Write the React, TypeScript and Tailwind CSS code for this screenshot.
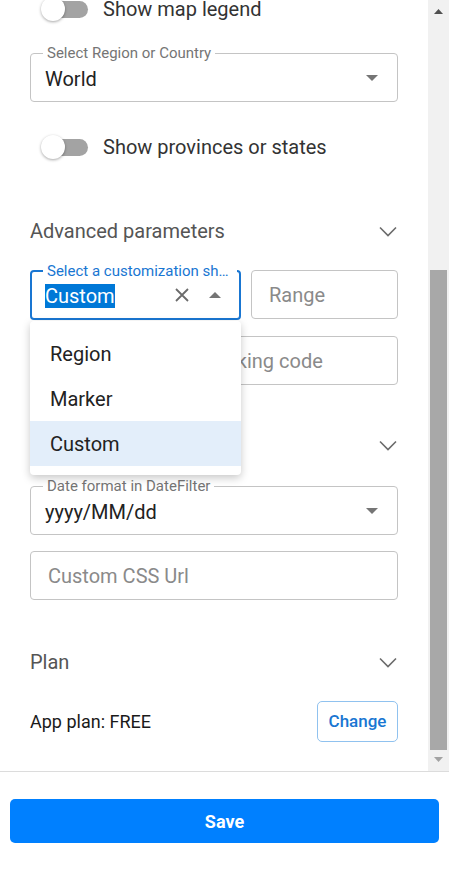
import React from "react";

function Toggle({ label }: { label: string }) {
    return (
        <div className="flex items-center pl-[11px] gap-[15px] h-[24px]">
            <div className="relative w-[47px] h-[24px] shrink-0">
                <div className="absolute left-[2px] top-[3.5px] w-[45px] h-[17px] rounded-full bg-[#a3a3a3]" />
                <div className="absolute left-0 top-0 w-[24px] h-[24px] rounded-full bg-white shadow-[0_1px_3px_rgba(0,0,0,0.35)]" />
            </div>
            <span className="text-[20px] text-[#333]">{label}</span>
        </div>
    );
}

function Chevron() {
    return (
        <svg width="18" height="11" viewBox="0 0 18 11" className="mr-[1px]">
            <path d="M1 1.5l8 8 8-8" fill="none" stroke="#6b6b6b" strokeWidth="1.6" />
        </svg>
    );
}

function ArrowDown() {
    return (
        <svg width="12" height="6" viewBox="0 0 12 6">
            <polygon points="0,0 12,0 6,6" fill="#757575" />
        </svg>
    );
}

function Heading({ title }: { title: string }) {
    return (
        <div className="flex items-center justify-between h-[24px]">
            <span className="text-[20px] text-[#555]">{title}</span>
            <Chevron />
        </div>
    );
}

function OutlinedSelect({ label, value }: { label: string; value: string }) {
    return (
        <div className="relative h-[49px] border border-[#c4c4c4] rounded-[4px] flex items-center justify-between pl-[14px] pr-[19px]">
            <span className="absolute -top-[10px] left-[12px] px-[4px] bg-white text-[15px] leading-[18px] text-[#757575]">
                {label}
            </span>
            <span className="text-[20px] text-[#222] mt-[3px]">{value}</span>
            <ArrowDown />
        </div>
    );
}

function OutlinedInput({ placeholder, className = "" }: { placeholder: string; className?: string }) {
    return (
        <div className={"h-[49px] border border-[#c4c4c4] rounded-[4px] flex items-center pl-[17px] overflow-hidden " + className}>
            <span className="text-[20px] text-[#8a8a8a] whitespace-nowrap">{placeholder}</span>
        </div>
    );
}

export default function App() {
    return (
        <div className="w-[449px] h-[869px] bg-white font-['Roboto',sans-serif] flex flex-col overflow-hidden">
            {/* Scroll area */}
            <div className="h-[771px] flex shrink-0">
                <div className="w-[428px] overflow-hidden">
                    <div className="px-[30px] flex flex-col -mt-[3px]">
                        <Toggle label="Show map legend" />

                        <div className="mt-[32px]">
                            <OutlinedSelect label="Select Region or Country" value="World" />
                        </div>

                        <div className="mt-[33px]">
                            <Toggle label="Show provinces or states" />
                        </div>

                        <div className="mt-[60px]">
                            <Heading title="Advanced parameters" />
                        </div>

                        <div className="mt-[27px] flex gap-[10px]">
                            <div className="relative w-[211px] shrink-0">
                                <div className="relative h-[50px] border-2 border-[#1976d2] rounded-[4px] flex items-center pl-[13px] pr-[18px]">
                                    <span className="absolute -top-[10px] left-[11px] max-w-[194px] px-[4px] bg-white text-[15px] leading-[18px] text-[#1976d2] whitespace-nowrap overflow-hidden text-ellipsis">
                                        Select a customization shape
                                    </span>
                                    <span className="text-[20px] leading-[24px] bg-[#0078d7] text-white mt-[2px]">Custom</span>
                                    <div className="ml-auto flex items-center gap-[20px]">
                                        <svg width="14" height="14" viewBox="0 0 14 14">
                                            <path d="M1 1l12 12M13 1L1 13" stroke="#6b6b6b" strokeWidth="1.8" />
                                        </svg>
                                        <svg width="12" height="6" viewBox="0 0 12 6">
                                            <polygon points="0,6 12,6 6,0" fill="#757575" />
                                        </svg>
                                    </div>
                                </div>

                                {/* Dropdown menu */}
                                <div className="absolute left-0 top-[51px] w-[211px] z-10 bg-white rounded-[4px] shadow-[0_3px_8px_rgba(0,0,0,0.22)] pt-[10px] pb-[9px]">
                                    <div className="h-[45px] flex items-center pl-[20px] text-[20px] text-[#222]">Region</div>
                                    <div className="h-[45px] flex items-center pl-[20px] text-[20px] text-[#222]">Marker</div>
                                    <div className="h-[45px] flex items-center pl-[20px] text-[20px] text-[#222] bg-[#e3eefa]">Custom</div>
                                </div>
                            </div>
                            <OutlinedInput placeholder="Range" className="flex-1" />
                        </div>

                        <div className="mt-[16px]">
                            <OutlinedInput placeholder="Google Analytics tracking code" />
                        </div>

                        <div className="mt-[48px]">
                            <Heading title="Display" />
                        </div>

                        <div className="mt-[29px]">
                            <OutlinedSelect label="Date format in DateFilter" value="yyyy/MM/dd" />
                        </div>

                        <div className="mt-[16px]">
                            <OutlinedInput placeholder="Custom CSS Url" />
                        </div>

                        <div className="mt-[50px]">
                            <Heading title="Plan" />
                        </div>

                        <div className="mt-[27px] flex items-center justify-between">
                            <span className="text-[18px] text-[#1a1a1a]">App plan: FREE</span>
                            <button className="h-[41px] w-[81px] rounded-[5px] border border-[#90c2ef] text-[#1976d2] text-[17px] font-medium">
                                Change
                            </button>
                        </div>
                    </div>
                </div>

                {/* Scrollbar */}
                <div className="w-[21px] bg-[#f1f1f1] flex flex-col items-center">
                    <div className="h-[270px] w-full flex justify-center pt-[9px]">
                        <svg width="9" height="5" viewBox="0 0 9 5">
                            <polygon points="0,5 9,5 4.5,0" fill="#505050" />
                        </svg>
                    </div>
                    <div className="w-[17px] h-[480px] bg-[#a8a8a8]" />
                    <div className="pt-[7px]">
                        <svg width="9" height="5" viewBox="0 0 9 5">
                            <polygon points="0,0 9,0 4.5,5" fill="#a3a3a3" />
                        </svg>
                    </div>
                </div>
            </div>

            {/* Footer */}
            <div className="border-t border-[#dcdcdc] px-[10px] pt-[27px]">
                <button className="w-full h-[44px] rounded-[5px] bg-[#0080ff] text-white text-[18px] font-bold">
                    Save
                </button>
            </div>
        </div>
    );
}
